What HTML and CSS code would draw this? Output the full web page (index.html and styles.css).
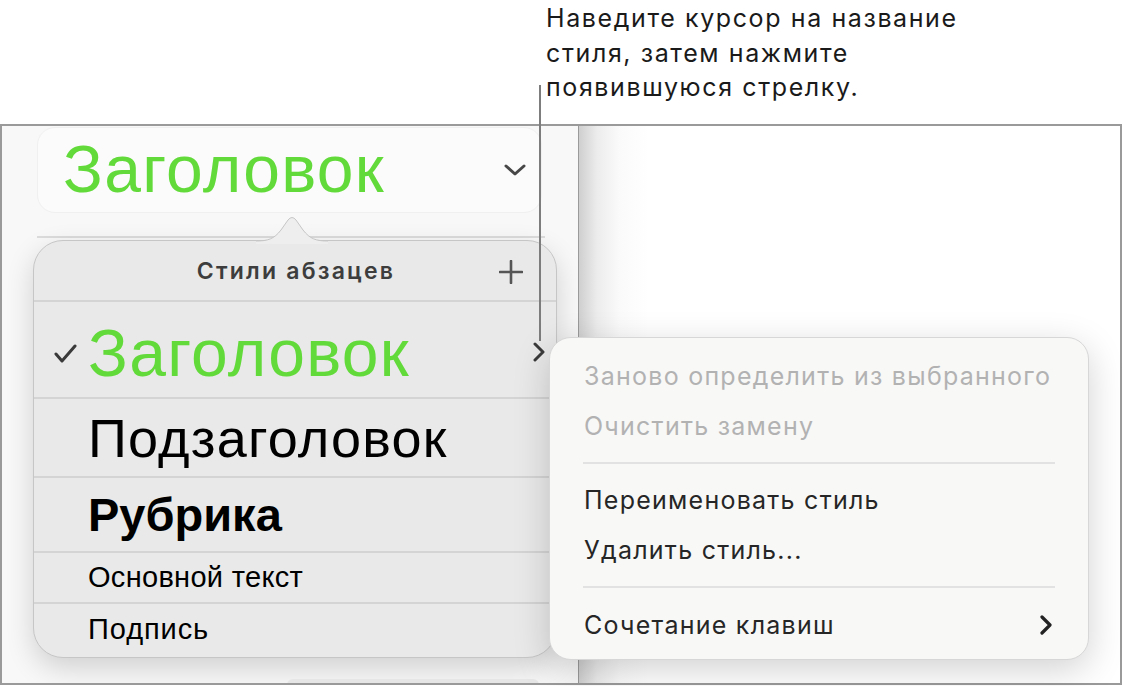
FILE: index.html
```html
<!DOCTYPE html>
<html lang="ru">
<head>
    <meta charset="UTF-8">
    <meta name="viewport" content="width=device-width, initial-scale=1.0">
    <title>Стили абзацев</title>
    <link rel="stylesheet" href="styles.css">
</head>
<body>
    <div class="page">
        <p class="callout">Наведите курсор на название<br>стиля, затем нажмите<br>появившуюся стрелку.</p>
        <div class="callout-line"></div>

        <div class="window">
            <aside class="sidebar">
                <div class="style-button">
                    <span class="style-current">Заголовок</span>
                    <svg class="chevron-down" width="22" height="14" viewBox="0 0 22 14">
                        <polyline points="2,3 11,11 20,3" />
                    </svg>
                </div>
                <div class="sidebar-rule"></div>

                <div class="popover">
                    <svg class="popover-arrow" width="72" height="30" viewBox="0 0 72 30">
                        <path class="arrow-fill" d="M0,30 L0,27 C12,27 18,25 25,16 L32,6 Q36,1 40,6 L47,16 C54,25 60,27 72,27 L72,30 Z" />
                        <path class="arrow-edge" d="M0,27 C12,27 18,25 25,16 L32,6 Q36,1 40,6 L47,16 C54,25 60,27 72,27" />
                    </svg>
                    <div class="popover-head">
                        <span>Стили абзацев</span>
                        <svg class="plus" width="24" height="24" viewBox="0 0 24 24">
                            <line x1="12" y1="1" x2="12" y2="23" />
                            <line x1="1" y1="12" x2="23" y2="12" />
                        </svg>
                    </div>
                    <ul class="style-list">
                        <li class="style-row row-title">
                            <svg class="check" width="24" height="20" viewBox="0 0 24 20">
                                <polyline points="2,10 8,17 21,2" />
                            </svg>
                            <span>Заголовок</span>
                            <svg class="row-arrow" width="14" height="20" viewBox="0 0 14 20">
                                <polyline points="3,2 11,10 3,18" />
                            </svg>
                        </li>
                        <li class="style-row row-subtitle"><span>Подзаголовок</span></li>
                        <li class="style-row row-heading"><span>Рубрика</span></li>
                        <li class="style-row row-body"><span>Основной текст</span></li>
                        <li class="style-row row-caption"><span>Подпись</span></li>
                    </ul>
                </div>
                <div class="bottom-bar"></div>
            </aside>
            <main class="canvas"></main>
        </div>

        <div class="menu">
            <div class="menu-item disabled">Заново определить из выбранного</div>
            <div class="menu-item disabled">Очистить замену</div>
            <div class="menu-sep"></div>
            <div class="menu-item">Переименовать стиль</div>
            <div class="menu-item">Удалить стиль...</div>
            <div class="menu-sep"></div>
            <div class="menu-item has-sub">
                <span>Сочетание клавиш</span>
                <svg width="14" height="20" viewBox="0 0 14 20">
                    <polyline points="3,2 11,10 3,18" />
                </svg>
            </div>
        </div>
    </div>
</body>
</html>
```

FILE: styles.css
```css
* {
  box-sizing: border-box;
}

body {
  margin: 0;
  background: #fff;
  font-family: "Inter", "Noto Sans", sans-serif;
  color: #1c1c1c;
}

.page {
  position: relative;
  width: 1123px;
  height: 686px;
  overflow: hidden;
}

/* Callout */
.callout {
  margin: 0;
  height: 124px;
  padding: 1px 0 0 546px;
  font-size: 25px;
  line-height: 34.5px;
  letter-spacing: 1.6px;
  color: #1a1a1a;
}

.callout-line {
  position: absolute;
  left: 539px;
  top: 85px;
  width: 2px;
  height: 256px;
  background: #7d7d7d;
  z-index: 5;
}

/* Window frame */
.window {
  display: grid;
  grid-template-columns: 577px 1fr;
  width: 1122px;
  height: 561px;
  border: 2px solid #9a9a9a;
}

.sidebar {
  position: relative;
  background: #f8f8f8;
  border-right: 1.5px solid #9a9a9a;
  padding: 1px 36px 0 35px;
  overflow: hidden;
}

.style-button {
  display: flex;
  align-items: center;
  justify-content: space-between;
  height: 86px;
  padding: 0 15px 0 25px;
  background: #fbfbfb;
  border: 1px solid #f0f0f0;
  border-radius: 18px;
}

.style-current {
  font-family: "Liberation Sans", Arial, sans-serif;
  font-size: 66px;
  letter-spacing: 1.3px;
  line-height: 1;
  color: #62da3a;
  padding-bottom: 2px;
}

.chevron-down polyline {
  fill: none;
  stroke: #474747;
  stroke-width: 3;
  stroke-linecap: round;
  stroke-linejoin: round;
}

.sidebar-rule {
  height: 2px;
  margin-top: 23px;
  margin-right: -3px;
  background: #dcdcdc;
}

/* Paragraph styles popover */
.popover {
  position: absolute;
  left: 31px;
  top: 114px;
  width: 524px;
  height: 418px;
  background: #e9e9e9;
  border: 1px solid #c6c6c6;
  border-radius: 30px;
  box-shadow: 0 10px 28px rgba(0, 0, 0, 0.16);
}

.popover-arrow {
  position: absolute;
  left: 222px;
  top: -27px;
}

.arrow-fill {
  fill: #eeeeee;
}

.arrow-edge {
  fill: none;
  stroke: #c6c6c6;
  stroke-width: 1;
}

.popover-head {
  position: relative;
  height: 59px;
  display: flex;
  align-items: center;
  justify-content: center;
  font-size: 23px;
  font-weight: 600;
  letter-spacing: 2.2px;
  color: #3d3d3d;
  padding-left: 2px;
}

.plus {
  position: absolute;
  right: 33px;
  top: 19px;
}

.plus line {
  stroke: #555;
  stroke-width: 2.6;
  stroke-linecap: round;
}

.style-list {
  list-style: none;
  margin: 0;
  padding: 0;
}

.style-row {
  position: relative;
  display: flex;
  align-items: center;
  padding-left: 54px;
  border-top: 2px solid #d4d4d4;
  font-family: "Liberation Sans", Arial, sans-serif;
  color: #000;
  line-height: 1;
}

.row-title {
  height: 97px;
  font-size: 66px;
  letter-spacing: 1.3px;
  color: #62da3a;
  padding-top: 6px;
}

.check {
  position: absolute;
  left: 20px;
  top: 42px;
}

.check polyline,
.row-arrow polyline {
  fill: none;
  stroke: #3a3a3a;
  stroke-width: 3;
  stroke-linecap: round;
  stroke-linejoin: round;
}

.row-arrow {
  position: absolute;
  right: 10px;
  top: 40px;
}

.row-subtitle {
  height: 79px;
  font-size: 54px;
  letter-spacing: 1.2px;
}

.row-heading {
  height: 75px;
  font-size: 47px;
  font-weight: bold;
}

.row-body {
  height: 51px;
  font-size: 29px;
  letter-spacing: 0.3px;
}

.row-caption {
  height: 56px;
  font-size: 29px;
  letter-spacing: 0.9px;
  padding-bottom: 4px;
}

.bottom-bar {
  position: absolute;
  left: 285px;
  bottom: -8px;
  width: 252px;
  height: 12px;
  background: #e6e6e6;
  border-radius: 6px;
}

/* Document canvas */
.canvas {
  background: linear-gradient(to right, #cfcfcf 0, #ececec 18px, #fafafa 40px, #fff 70px);
}

/* Style context menu */
.menu {
  position: absolute;
  left: 549px;
  top: 337px;
  width: 540px;
  height: 323px;
  padding: 13px 33px 0 34px;
  background: #f8f8f7;
  border: 1px solid #d7d7d7;
  border-radius: 22px;
  box-shadow: 0 10px 36px rgba(0, 0, 0, 0.18);
  z-index: 6;
}

.menu-item {
  display: flex;
  align-items: center;
  justify-content: space-between;
  height: 50px;
  font-size: 25px;
  letter-spacing: 1.25px;
  white-space: nowrap;
  color: #262626;
}

.menu-item.disabled {
  color: #b2b2b2;
}

.menu-sep {
  height: 2px;
  margin: 11px 0 11px -1px;
  background: #e2e2e2;
}

.has-sub {
  padding-right: 2px;
  height: 52px;
}

.has-sub polyline {
  fill: none;
  stroke: #222;
  stroke-width: 3.2;
  stroke-linecap: round;
  stroke-linejoin: round;
}
```
